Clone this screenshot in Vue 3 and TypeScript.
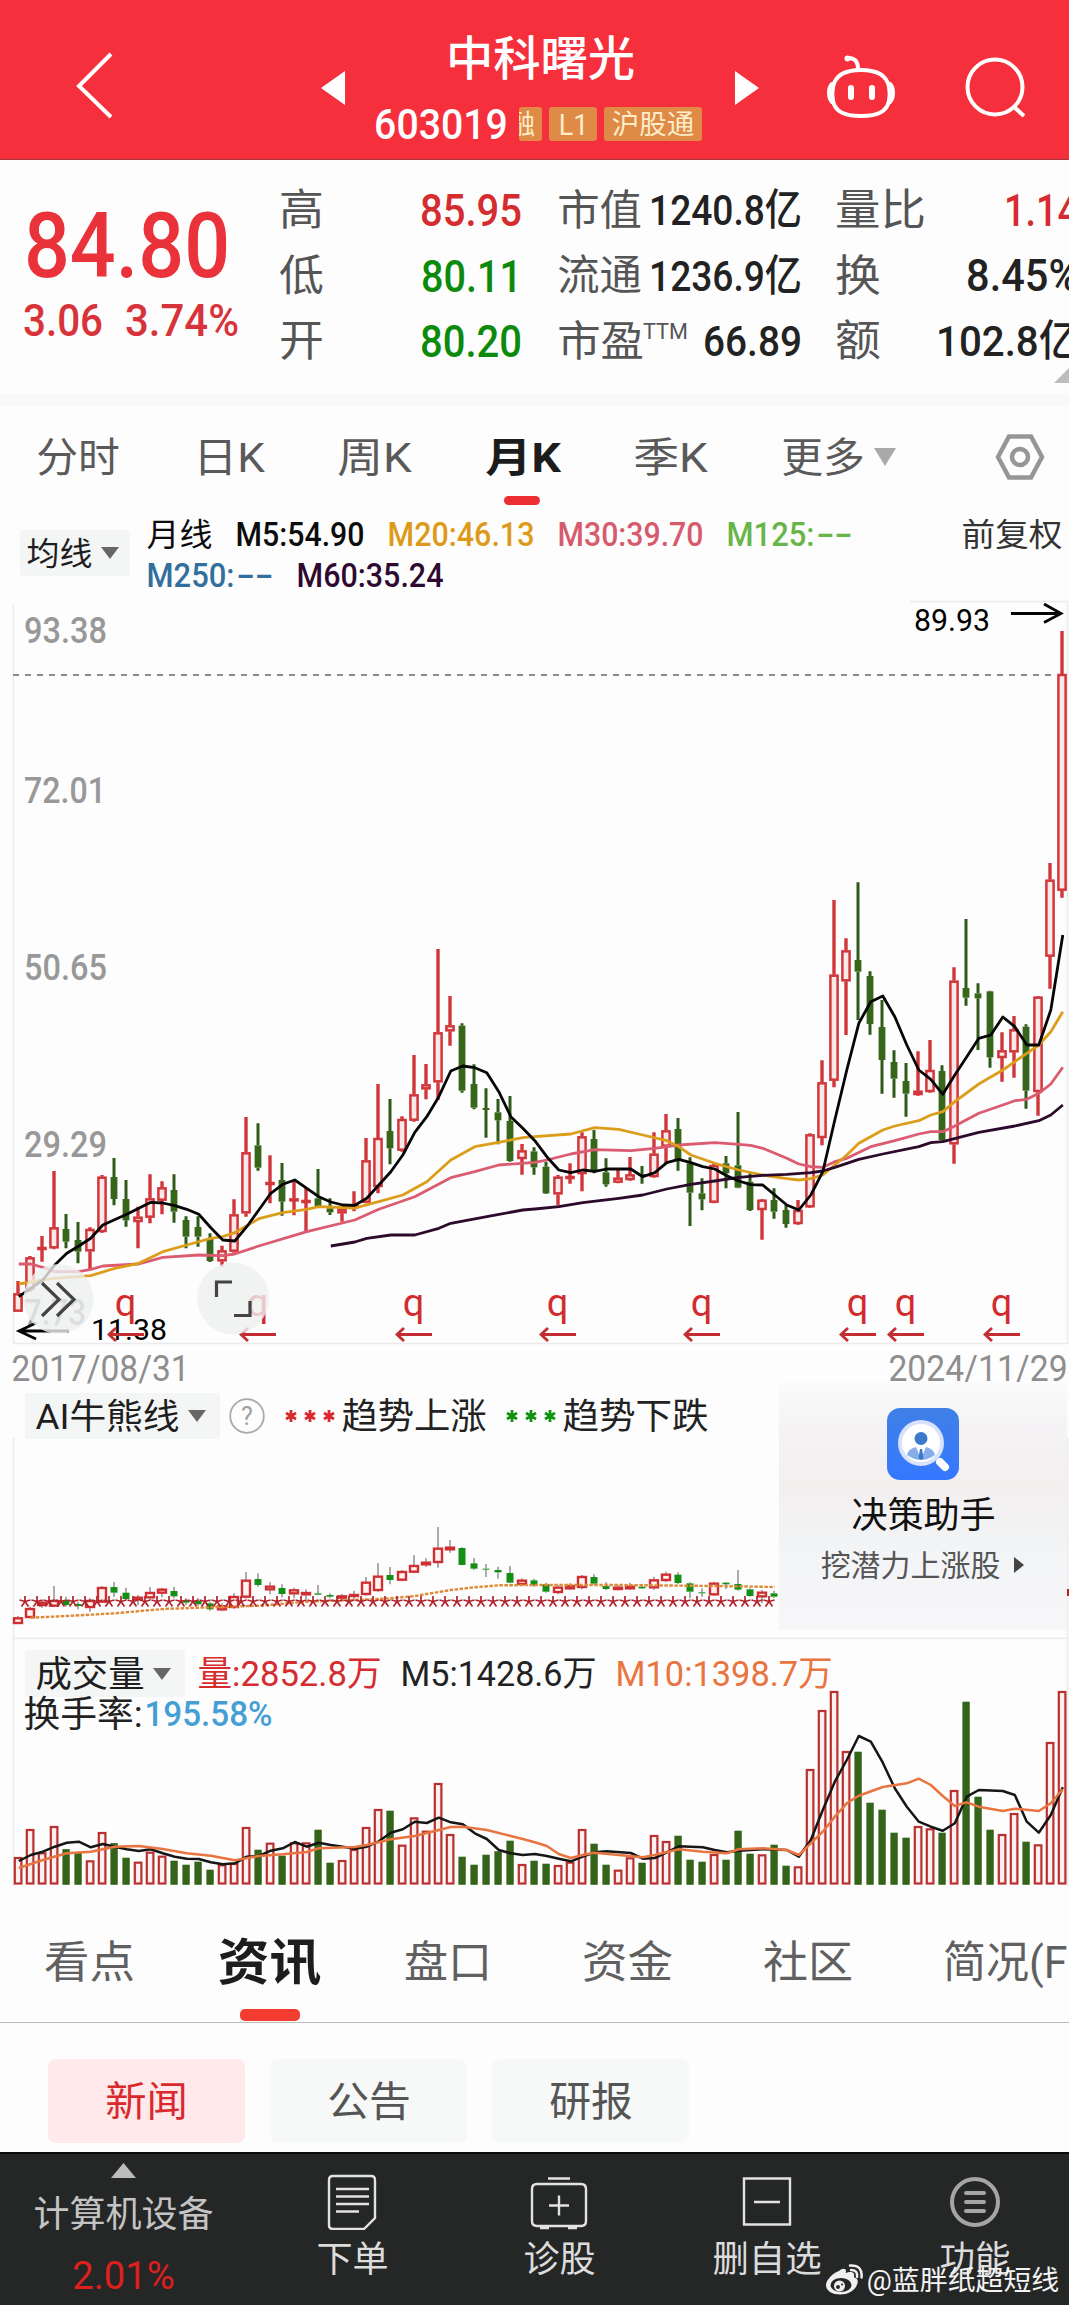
<script setup lang="ts">
import { h } from 'vue'

interface FitProps { t: string; w: number; s: number; b?: number }

// Single line of text whose glyphs span exactly `w` pixels at font size `s`.
const Fit = (p: FitProps) => {
  const pad = p.s * 0.045
  return h('svg', { class: 'fit', width: p.w, height: p.s }, [
    h('text', {
      x: -pad, y: p.s * 0.862, 'font-size': p.s, 'font-weight': p.b ?? 400, fill: 'currentColor',
      textLength: p.w + pad * 2, lengthAdjust: 'spacingAndGlyphs',
    }, p.t),
  ])
}

type Candle = { x: number; up: boolean; hi: number; top: number; bot: number; lo: number }
type Bar = { x: number; up: boolean; top: number }

const STEP = 12
const px = (i: number) => 18 + STEP * i

// Each record: direction, high, body top, body bottom, low (units of 1/3 px).
const parseCandles = (src: string): Candle[] =>
  src.trim().split(/\s+/).map((rec, i) => {
    const [hi, top, bot, lo] = rec.slice(1).split(',').map((n) => Number(n) / 3)
    return { x: px(i), up: rec[0] === 'r', hi, top, bot, lo }
  })

const parseLine = (src: string): string =>
  src.trim().split(/\s+/).map((rec) => {
    const [i, v] = rec.split(':').map(Number)
    return `${px(i) + 0.8},${(v / 3).toFixed(1)}`
  }).join(' ')

const candles = parseCandles(`
r1203,1240,1295,1295 r1128,1132,1230,1235 r1068,1101,1108,1145 r873,1042,1105,1108 g1002,1047,1085,1105
g1026,1080,1115,1150 r1042,1047,1114,1168 r885,890,1056,1058 g834,891,957,976 g900,957,1021,1040
r980,1010,1026,1105 r883,955,1013,1030 r904,922,962,1003 g883,930,995,1028 g1009,1020,1070,1105
g1009,1041,1070,1100 g1060,1075,1143,1146 r1097,1111,1144,1160 r958,1003,1115,1118 r711,817,1000,1010
g730,796,863,872 r826,906,912,970 g849,900,965,1007 r905,955,961,1006 r925,960,966,1055
g867,955,978,980 g955,985,997,1005 r980,986,1000,1025 r934,975,985,994 r774,841,968,970
r612,774,921,940 g657,753,805,853 r709,717,812,815 r525,643,722,725 r552,613,628,658
r207,457,607,660 r348,436,454,497 g430,437,632,638 g553,612,683,688 g625,684,690,773
g657,697,721,793 g648,723,843,845 r792,811,837,884 g802,814,862,884 g845,860,940,942
r885,890,943,976 r850,888,894,911 r757,769,882,934 g750,777,873,880 g835,877,913,920
r870,893,908,910 r831,883,900,902 g858,882,888,911 r757,821,891,893 r702,751,800,850
g714,747,840,872 g832,850,938,1038 g895,940,958,991 r850,855,968,970 g828,850,880,925
g696,856,923,925 g880,905,990,993 r957,959,990,1079 g925,960,995,1016 g975,990,1032,1043
r960,990,1032,1034 r760,763,982,984 r541,607,774,796 r60,284,602,622 r175,211,304,465
g7,240,275,420 g274,288,432,464 g360,441,540,641 g511,546,596,653 g549,603,641,710
r514,632,645,647 r480,570,636,638 g556,573,780,782 r262,302,793,851 g117,324,353,377
g310,340,355,510 g332,334,532,563 r457,511,534,605 r408,448,517,593 g433,440,632,686
r348,350,636,707 r-51,-1,230,326 r-747,-618,32,53`)

const averages = [
  { color: '#db5b70', pts: parseLine('0:1152 1:1152 2:1162 3:1175 5:1175 6:1168 7:1158 10:1152 12:1132 15:1125 17:1127 18:1122 20:1098 24:1055 28:1020 30:988 33:950 36:893 38:875 40:855 43:847 44:840 46:822 48:809 51:812 53:805 55:795 58:788 60:793 61:796 62:805 63:820 64:835 65:852 66:860 67:862 68:845 69:835 71:800 73:782 75:762 76:755 77:755 78:738 80:700 82:675 83:662 84:658 85:640 86:612 87:562') },
  { color: '#dc9d1b', pts: parseLine('0:1212 2:1200 3:1195 6:1187 8:1165 10:1150 12:1115 14:1095 16:1075 17:1070 18:1058 20:1016 22:998 24:988 25:980 28:984 30:965 32:945 34:905 36:840 38:800 40:787 42:773 43:770 46:762 48:743 50:748 52:765 54:782 55:800 56:825 58:850 60:870 62:885 64:896 65:900 66:896 67:885 68:855 69:825 70:790 72:750 73:738 75:722 76:705 77:695 78:665 80:612 82:570 84:520 85:495 86:455 87:395') },
  { color: '#2b0a2c', pts: parseLine('26:1098 28:1086 29:1075 31:1065 33:1065 35:1045 36:1030 39:1010 42:990 43:987 45:980 47:968 50:955 52:945 54:927 56:913 58:903 60:892 62:886 64:883 66:878 67:873 68:862 70:838 72:822 75:800 76:788 77:785 80:757 83:738 85:722 86:705 87:675') },
  { color: '#060606', pts: parseLine('0:1250 2:1200 3:1155 4:1120 5:1098 6:1075 7:1035 9:1003 11:967 12:969 13:977 14:988 15:1003 16:1043 17:1080 18:1083 19:1040 20:990 21:940 22:913 23:900 24:925 25:950 26:966 27:975 28:976 29:955 30:915 31:875 32:825 33:757 34:710 35:650 36:573 37:558 38:563 39:578 40:635 41:710 42:745 43:782 44:830 45:870 46:878 47:870 48:874 49:867 51:867 52:890 53:878 54:848 55:838 56:848 57:860 58:867 59:887 60:903 61:914 62:915 63:945 64:975 65:990 66:945 67:875 68:720 69:570 70:430 71:365 72:348 73:410 74:495 75:570 76:598 77:643 78:585 79:530 80:475 81:465 82:411 83:440 84:495 85:495 86:390 87:165') },
]

const trend = parseCandles(`
r828,832,852,852 r800,804,834,834 r780,785,798,803 r738,780,800,802 g770,780,795,800 g785,792,798,808
r775,780,804,815 r738,741,788,788 g726,741,758,770 g743,758,777,780 r765,770,780,795 r741,756,775,780
r743,746,761,772 g741,753,769,775 g775,780,788,795 g775,783,793,797 g785,790,808,812 r790,796,811,814
r760,768,804,806 r696,719,773,776 g700,717,735,740 r727,737,751,763 g733,744,762,772 r743,748,763,775
r748,756,766,778 g735,760,764,766 g760,765,770,775 r762,766,776,780 r752,762,771,778 r711,725,765,767
r670,707,753,755 g681,705,720,733 r690,693,722,724 r646,675,698,700 r655,665,676,681 r561,623,669,683
r600,620,631,638 g622,624,675,676 g654,670,686,690 g672,686,689,711 g680,690,697,716 g678,699,728,730
r715,719,735,738 g716,721,735,740 g728,733,755,758 r735,740,759,762 r730,735,748,750 r705,708,744,748
g703,711,731,735 g727,738,747,750 r735,740,750,751 r728,737,748,750 g735,740,745,747 r710,718,745,750
r695,701,723,727 g697,704,729,733 g727,730,755,775 g745,757,760,770 r725,728,766,768 g727,728,733,747
g690,732,749,752 g745,748,768,770 r750,755,772,790 g752,760,770,774`)
const trendLine = parseLine('1:833 4:828 8:820 12:807 16:802 20:797 24:785 28:780 31:775 33:768 36:750 38:742 40:736 44:735 50:735 58:738 63:741')
const stars = Array.from({ length: 63 }, (_, k) => 25 + k * STEP)

const volumes: Bar[] = `r654 r570 r640 r561 g628 g638 r664 r579 g610 g654 r668 r638 r650 g663 g675 g666 g690 r676 r672 r564 g630 r611
g648 r610 r610 g570 g669 r663 r630 r564 r510 g513 r617 r535 r575 r432 r585 g651 g675 g645 g635 g603 r675 g663
g672 r678 r668 r570 g612 g675 r692 r655 g669 r588 r606 g588 g660 g666 r645 g660 g573 g642 r646 g615 g678 r682
r390 r213 r156 r336 g336 g489 g510 g579 g594 r561 r568 g579 r453 g186 g471 g570 r585 r522 g606 r616 r309 r156`
  .split(/\s+/).map((rec, i) => ({ x: px(i), up: rec[0] === 'r', top: Number(rec.slice(1)) / 3 }))
const vol5 = parseLine('0:663 1:645 2:635 3:620 4:608 5:605 6:622 7:612 8:620 9:628 10:633 11:628 12:640 13:650 14:656 15:657 16:667 17:673 18:670 19:650 20:648 21:632 22:625 23:606 24:620 25:608 26:615 27:620 28:626 29:620 30:604 31:578 32:568 33:545 34:549 35:533 36:547 37:553 38:580 39:597 40:630 41:640 42:645 43:642 44:648 45:656 46:664 47:650 48:637 49:634 51:639 52:656 53:654 54:637 55:619 57:622 58:630 59:637 60:632 62:628 64:630 65:650 66:600 67:510 68:425 69:360 70:288 71:305 72:368 73:445 74:500 75:545 76:560 77:572 78:550 79:470 80:450 82:453 83:465 84:545 85:578 86:525 87:442')
const vol10 = parseLine('0:684 2:660 4:640 6:635 8:620 10:618 12:627 14:640 16:647 18:661 20:648 22:643 24:636 25:625 28:621 29:615 31:598 33:588 35:570 36:561 37:560 39:570 41:588 42:597 43:607 44:618 45:642 46:654 47:645 48:638 50:645 52:652 53:645 55:628 57:635 59:640 60:628 62:625 64:630 65:645 66:610 67:575 68:530 69:490 70:467 72:441 74:430 75:416 76:435 77:468 78:498 79:487 80:500 82:513 83:506 85:513 86:490 87:448')

const axis = [
  { t: '93.38', y: 643, w: 83 }, { t: '72.01', y: 803, w: 82 }, { t: '50.65', y: 980, w: 83 },
  { t: '29.29', y: 1157, w: 83 }, { t: '7.73', y: 1325, w: 62 },
]
const rights = [126, 258, 414, 558, 702, 858, 906, 1002]
</script>

<template>
  <main class="screen">
    <header class="top">
      <svg class="back" width="40" height="70" viewBox="74 50 40 70"><path d="M111 54 79 86l32 31" /></svg>
      <svg class="arrow" width="24" height="34"><path d="M24 0v34L0 17z" /></svg>
      <div class="name">
        <Fit t="中科曙光" :w="185" :s="47" :b="500" />
        <div class="code">
          <Fit t="603019" :w="130" :s="42" :b="500" />
          <span class="tag cut"><Fit t="融" :w="26" :s="27" /></span>
          <span class="tag l1"><Fit t="L1" :w="27" :s="29" /></span>
          <span class="tag hgt"><Fit t="沪股通" :w="80" :s="27" /></span>
        </div>
      </div>
      <svg class="arrow next" width="24" height="34"><path d="M0 0v34l24-17z" /></svg>
      <svg class="bot" width="70" height="66" viewBox="826 54 70 66">
        <path d="M847 58q11-1 11 11M861 70c18 0 26 6 28 17 1 5 1 9 0 14-2 10-10 15-28 15s-26-5-28-15c-1-5-1-9 0-14 2-11 10-17 28-17z" />
        <path d="M832 84c-4 4-4 14 0 18M890 84c4 4 4 14 0 18" />
        <circle cx="847.500" cy="58.500" r="3" class="solid" />
        <path d="M851 88v9M872 88v9" class="eye" />
      </svg>
      <svg class="find" width="64" height="64" viewBox="964 56 64 64"><circle cx="995" cy="87" r="27.500" /><path d="m1014 107 10 9" /></svg>
    </header>

    <section class="quote">
      <div class="price">
        <Fit t="84.80" :w="198" :s="91" :b="500" />
        <div class="delta"><Fit t="3.06" :w="76" :s="45" :b="500" /><Fit t="3.74%" :w="110" :s="45" :b="500" /></div>
      </div>
      <div class="col c1">
        <div><Fit t="高" :w="41" :s="43" /><Fit class="up" t="85.95" :w="98" :s="45" :b="500" /></div>
        <div><Fit t="低" :w="41" :s="43" /><Fit class="down" t="80.11" :w="97" :s="45" :b="500" /></div>
        <div><Fit t="开" :w="41" :s="43" /><Fit class="down" t="80.20" :w="98" :s="45" :b="500" /></div>
      </div>
      <div class="col c2">
        <div><Fit t="市值" :w="81" :s="42" /><Fit class="ink" t="1240.8亿" :w="149" :s="43" :b="500" /></div>
        <div><Fit t="流通" :w="81" :s="42" /><Fit class="ink" t="1236.9亿" :w="149" :s="43" :b="500" /></div>
        <div><span class="pe"><Fit t="市盈" :w="83" :s="42" /><Fit t="TTM" :w="43" :s="22" /></span><Fit class="ink" t="66.89" :w="95" :s="43" :b="500" /></div>
      </div>
      <div class="col c3">
        <div><Fit t="量比" :w="87" :s="43" /><Fit class="up" t="1.14" :w="71" :s="44" :b="500" /></div>
        <div><Fit t="换" :w="42" :s="43" /><Fit class="ink" t="8.45%" :w="109" :s="44" :b="500" /></div>
        <div><Fit t="额" :w="42" :s="43" /><Fit class="ink" t="102.8亿" :w="139" :s="43" :b="500" /></div>
      </div>
      <svg class="corner" width="15" height="15"><path d="M15 0v15H0z" /></svg>
    </section>

    <nav class="periods">
      <Fit t="分时" :w="80" :s="41" /><Fit t="日K" :w="68" :s="41" /><Fit t="周K" :w="71" :s="41" />
      <span class="on"><Fit t="月K" :w="72" :s="41" :b="700" /><i></i></span>
      <Fit t="季K" :w="71" :s="41" />
      <span class="more"><Fit t="更多" :w="80" :s="41" /><svg width="22" height="18"><path d="M0 0h22L11 18z" /></svg></span>
      <svg class="hex" width="50" height="48" viewBox="-25 -24 50 48"><path d="M-11-20.500h22L22 0 11 20.500h-22L-22 0z" /><circle r="8" /></svg>
    </nav>

    <section class="legend">
      <span class="drop ma"><Fit t="均线" :w="63" :s="32" /><svg width="18" height="12"><path d="M0 0h18L9 12z" /></svg></span>
      <div class="lines">
        <div>
          <Fit class="k" t="月线" :w="63" :s="32" /><Fit class="k" t="M5:54.90" :w="126" :s="33" :b="500" />
          <Fit class="m20" t="M20:46.13" :w="144" :s="33" :b="500" /><Fit class="m30" t="M30:39.70" :w="143" :s="33" :b="500" />
          <span class="m125"><Fit t="M125:" :w="85" :s="33" :b="500" /><Fit t="--" :w="33" :s="33" :b="500" /></span>
        </div>
        <div>
          <span class="m250"><Fit t="M250:" :w="85" :s="33" :b="500" /><Fit t="--" :w="34" :s="33" :b="500" /></span>
          <Fit class="m60" t="M60:35.24" :w="144" :s="33" :b="500" />
        </div>
      </div>
      <Fit class="adj" t="前复权" :w="98" :s="32" />
    </section>

    <svg class="main" width="1069" height="745" viewBox="0 600 1069 745">
      <path d="M13.500 604V1343.500H1067.500V601.500H910" class="frame" />
      <text v-for="a in axis" :key="a.t" x="24" :y="a.y" :textLength="a.w" font-size="36" font-weight="500" lengthAdjust="spacingAndGlyphs" fill="#989898">{{ a.t }}</text>
      <path d="M13 675H1056" class="dash" />
      <g transform="translate(0 880)">
        <g v-for="(c, i) in candles" :key="i" :class="c.up ? 'rise' : 'fall'">
          <path :d="`M${c.x} ${c.hi}V${c.top}M${c.x} ${c.bot}V${c.lo}`" />
          <rect v-if="c.up" :x="c.x - 3.6" :y="c.top + 1" width="7.200" :height="Math.max(c.bot - c.top - 2, 1)" />
          <rect v-else :x="c.x - 3.4" :y="c.top" width="6.800" :height="c.bot - c.top" />
        </g>
        <polyline v-for="m in averages" :key="m.color" :points="m.pts" :stroke="m.color" class="avg" />
      </g>
      <text x="914" y="631" font-size="32" textLength="76" lengthAdjust="spacingAndGlyphs">89.93</text>
      <path d="M1011 613.500h50M1044 604l17 9.500-17 9" class="mark" />
      <text x="91" y="1340" font-size="29" textLength="76" lengthAdjust="spacingAndGlyphs">11.38</text>
      <path d="M69 1331H19M36 1323l-17 8 17 8" class="mark" />
      <g v-for="r in rights" :key="r" class="right">
        <text :x="r - 0.5" y="1316" text-anchor="middle" font-size="38">q</text>
        <path :d="`M${r + 18} 1334.500H${r - 17}M${r - 10} 1328l-7 6.500 7 6.500`" />
      </g>
      <circle cx="58.500" cy="1299" r="35" class="knob" />
      <circle cx="233" cy="1298.500" r="36" class="knob" />
      <path d="m42 1283 17 16.500-17 16.500M57 1283l17 16.500-17 16.500M216.500 1297v-15H232M250 1301v14.500h-16" class="glyph" />
    </svg>

    <div class="dates"><Fit t="2017/08/31" :w="175" :s="36" /><Fit t="2024/11/29" :w="176" :s="36" /></div>

    <section class="bull">
      <div class="head">
        <span class="drop ai"><Fit t="AI牛熊线" :w="141" :s="35" /><svg width="18" height="12"><path d="M0 0h18L9 12z" /></svg></span>
        <svg class="help" width="36" height="36"><circle cx="18" cy="18" r="16.800" /><text x="18" y="27" text-anchor="middle" font-size="25">?</text></svg>
        <svg class="ast red" width="52" height="14"><path v-for="x in [7, 26, 45]" :key="x" :d="`M${x} 1v12M${x - 5} 4l10 6M${x + 5} 4l-10 6`" /></svg>
        <Fit t="趋势上涨" :w="142" :s="36" />
        <svg class="ast green" width="52" height="14"><path v-for="x in [7, 26, 45]" :key="x" :d="`M${x} 1v12M${x - 5} 4l10 6M${x + 5} 4l-10 6`" /></svg>
        <Fit t="趋势下跌" :w="143" :s="36" />
      </div>
      <svg class="plot" width="1069" height="201" viewBox="0 1438 1069 201">
        <path d="M13.500 1438V1639M1067.500 1438V1639M13 1638.500H1067" class="frame" />
        <path d="M1068 1589v7" stroke="#b22" stroke-width="2" />
        <g transform="translate(0 1340)">
          <g v-for="(c, i) in trend" :key="i" :class="c.up ? 'trise' : 'tfall'">
            <path :d="`M${c.x} ${c.hi}V${c.top}M${c.x} ${c.bot}V${c.lo}`" />
            <rect v-if="c.up" :x="c.x - 4" :y="c.top + 1" width="8" :height="Math.max(c.bot - c.top - 2, 1)" />
            <rect v-else :x="c.x - 3.5" :y="c.top" width="7" :height="Math.max(c.bot - c.top, 1)" />
          </g>
          <polyline :points="trendLine" class="dots" />
          <path v-for="x in stars" :key="x" :d="`M${x} 256v5.500M${x} 261.500l-5.500-1.500M${x} 261.500l5.500-1.500M${x} 261.500l-3.500 5M${x} 261.500l3.500 5`" class="star" />
        </g>
      </svg>
      <aside class="helper">
        <svg width="72" height="72" viewBox="0 0 72 72">
          <defs><linearGradient id="tile" x1="0" y1="0" x2="0" y2="1"><stop offset="0" stop-color="#3f80e6" /><stop offset="1" stop-color="#3578ff" /></linearGradient></defs>
          <rect width="72" height="72" rx="13" fill="url(#tile)" />
          <path d="m53 54 5 5" stroke="#fff" stroke-width="8" stroke-linecap="round" />
          <circle cx="34" cy="35" r="21" fill="#fff" stroke="#d8e2fa" stroke-width="4" />
          <circle cx="34" cy="30.500" r="6.500" fill="#3c78cc" />
          <path d="M20 47q1-6 9-8l5 12 5-12q8 2 9 8-7 5-14 5t-14-5z" fill="#87aee8" />
          <path d="M33 41h2l1.500 9-2.500 2-2.500-2z" fill="#3c78cc" />
        </svg>
        <Fit t="决策助手" :w="141" :s="36" />
        <span><Fit t="挖潜力上涨股" :w="177" :s="30" /><svg width="10" height="16"><path d="M0 0l10 8-10 8z" /></svg></span>
      </aside>
    </section>

    <section class="volume">
      <svg class="plot" width="1069" height="251" viewBox="0 1639 1069 251">
        <path d="M13.500 1639V1886M1067.500 1639V1886" class="frame" />
        <g transform="translate(0 1640)">
          <template v-for="(v, i) in volumes" :key="i">
            <rect v-if="v.up" :x="v.x - 3.2" :y="v.top" width="6.600" :height="243.500 - v.top" class="vup" />
            <rect v-else :x="v.x - 3.2" :y="v.top" width="6.600" :height="244.500 - v.top" class="vdown" />
          </template>
          <polyline :points="vol5" stroke="#161616" class="vavg" />
          <polyline :points="vol10" stroke="#e8743f" class="vavg" />
        </g>
      </svg>
      <div class="over">
        <div class="r1">
          <span class="drop vol"><Fit t="成交量" :w="106" :s="36" /><svg width="18" height="12"><path d="M0 0h18L9 12z" /></svg></span>
          <Fit class="up" t="量:2852.8万" :w="181" :s="35" />
          <Fit class="ink" t="M5:1428.6万" :w="193" :s="35" />
          <Fit class="m10" t="M10:1398.7万" :w="214" :s="35" />
        </div>
        <div class="r2"><Fit t="换手率:" :w="116" :s="36" /><Fit class="rate" t="195.58%" :w="125" :s="35" :b="500" /></div>
      </div>
    </section>

    <nav class="sections">
      <Fit t="看点" :w="87" :s="44" />
      <span class="on"><Fit t="资讯" :w="99" :s="50" :b="700" /><i></i></span>
      <Fit t="盘口" :w="84" :s="44" /><Fit t="资金" :w="87" :s="44" /><Fit t="社区" :w="86" :s="44" /><Fit t="简况(F10)" :w="184" :s="44" />
    </nav>

    <div class="chips">
      <span class="sel"><Fit t="新闻" :w="79" :s="41" /></span>
      <span><Fit t="公告" :w="80" :s="41" /></span>
      <span><Fit t="研报" :w="80" :s="41" /></span>
    </div>

    <footer class="bar">
      <div class="sector">
        <svg width="25" height="15"><path d="M12.500 0 25 15H0z" /></svg>
        <Fit t="计算机设备" :w="177" :s="36" />
        <Fit class="pct" t="2.01%" :w="99" :s="38" />
      </div>
      <div class="act a1">
        <svg width="58" height="56" viewBox="-29 -28 58 56"><path d="M-19-26h38q4 0 4 4v38l-11 11h-31q-4 0-4-4v-45q0-4 4-4zM-16-13h33M-16-5.500h33M-16 2h33M-16 9.500H7" /></svg>
        <Fit t="下单" :w="69" :s="36" />
      </div>
      <div class="act a2">
        <svg width="58" height="56" viewBox="-29 -28 58 56"><path d="M-11-23.500h22M-22-18h44q5 0 5 5v32q0 5-5 5h-44q-5 0-5-5v-32q0-5 5-5zM-10 3.500H10M0-6.500v20M-19 26h9M9 26h9" /></svg>
        <Fit t="诊股" :w="69" :s="36" />
      </div>
      <div class="act a3">
        <svg width="58" height="56" viewBox="-29 -28 58 56"><path d="M-23-23.500h46v46h-46zM-13 0h26" /></svg>
        <Fit t="删自选" :w="106" :s="36" />
      </div>
      <div class="act a4">
        <svg width="58" height="56" viewBox="-29 -28 58 56"><circle r="23" /><path d="M-9-9H9M-9 0H9M-9 9H9" /></svg>
        <Fit t="功能" :w="68" :s="36" />
      </div>
      <div class="credit">
        <svg width="37" height="32" viewBox="0 0 37 32">
          <path d="M13 7c3-3 7-3 7 0 0 1-.5 2 0 2 2-1 7-2 8 1 .6 2-.8 3 .4 3.500 3 1 4 3 3 6-2 7-9 11-17 11C6 30.500 0 27 0 21 0 16 8 8 13 7z" />
          <ellipse cx="15" cy="21" rx="10.500" ry="7" class="hole" />
          <circle cx="13.500" cy="22" r="5.500" />
          <circle cx="12" cy="23" r="2" class="hole" /><circle cx="16" cy="20.500" r="1" class="hole" />
          <path d="M25 6q7 0 6 7M24 1.500q13-.5 11.500 12" class="wave" />
        </svg>
        <Fit t="@蓝胖纸超短线" :w="190" :s="27" />
      </div>
    </footer>
  </main>
</template>

<style>
body { background: #fdfdfd; }
</style>

<style scoped>
.screen { width: 1069px; height: 2305px; overflow: hidden; background: #fdfdfd; color: #222; font-family: Roboto, "Noto Sans CJK SC", sans-serif; }
.fit { display: block; flex: none; overflow: visible; }
svg { flex: none; display: block; }
.up { color: #d52c30; }
.down { color: #0b8a0b; }
.ink { color: #222; }

.top { height: 160px; box-sizing: border-box; border-bottom: 1px solid #a8343c; background: #f5303c; color: #fff; display: flex; align-items: flex-start; }
.back { margin: 50px 0 0 74px; fill: none; stroke: #fff; stroke-width: 4; }
.arrow { margin: 71px 0 0 207px; fill: #fff; }
.name { margin: 34px 0 0 31px; width: 328px; display: flex; flex-direction: column; align-items: flex-start; }
.name > .fit { margin-left: 72px; }
.code { display: flex; align-items: center; margin-top: 22px; height: 42px; }
.tag { height: 34px; background: #df8b47; border-radius: 3px; color: #fdecc8; display: flex; align-items: center; justify-content: center; overflow: hidden; }
.cut { width: 23px; margin-left: 13px; justify-content: flex-end; padding-right: 8px; box-sizing: border-box; }
.l1 { width: 48px; margin-left: 7px; }
.hgt { width: 98px; margin-left: 7px; }
.next { margin-left: 31px; }
.bot { margin: 54px 0 0 67px; fill: none; stroke: #fff; stroke-width: 4; stroke-linecap: round; }
.bot .solid { fill: #fff; stroke: none; }
.bot .eye { stroke-width: 6; }
.find { margin: 56px 0 0 68px; fill: none; stroke: #fff; stroke-width: 4; }

.quote { position: relative; height: 234px; border-bottom: 12px solid #f8faf9; box-sizing: content-box; display: flex; color: #555; }
.price { width: 212px; flex: none; margin: 39px 0 0 28px; color: #e9323a; }
.delta { display: flex; gap: 26px; margin: 7px 0 0 -3px; color: #d8333a; }
.col { flex: none; height: 176px; margin-top: 27px; display: flex; flex-direction: column; justify-content: space-between; }
.col > div { height: 45px; display: flex; justify-content: space-between; align-items: center; }
.c1 { width: 239px; margin-left: 41px; }
.c2 { width: 241px; margin-left: 39px; }
.c3 { width: 240px; margin-left: 37px; }
.pe { display: flex; gap: 2px; }
.corner { position: absolute; right: 0; top: 208px; fill: #bdbdbd; }

.periods { height: 106px; padding: 0 24px 4px 38px; display: flex; align-items: center; gap: 76.500px; color: #5a5a5a; box-sizing: border-box; }
.periods .on { position: relative; color: #1c1c1c; }
.periods .on i { position: absolute; left: 17px; top: 59px; width: 36px; height: 9px; border-radius: 5px; background: #ec2d34; }
.more { display: flex; align-items: center; gap: 11px; }
.more svg:last-child { fill: #a9a9a9; }
.hex { margin-left: auto; fill: none; stroke: #969696; stroke-width: 4.500; }

.legend { height: 88px; display: flex; align-items: flex-start; box-sizing: border-box; padding: 6px 8px 0 20px; }
.drop { display: flex; align-items: center; background: #f4f6f5; color: #1e1e1e; box-sizing: border-box; border-radius: 4px; gap: 10px; }
.drop svg:last-child { fill: #666; }
.ma { width: 110px; height: 46px; margin-top: 12px; padding-left: 8px; }
.lines { margin-left: 18px; display: flex; flex-direction: column; gap: 8px; }
.lines > div { display: flex; gap: 26px; }
.lines span { display: flex; gap: 5px; }
.adj { margin-left: auto; color: #333; }
.k { color: #0c0c0c; }
.m20 { color: #dd9a18; }
.m30 { color: #d65b6d; }
.m125 { color: #68b548; }
.m250 { color: #316f9d; }
.m60 { color: #2e0a31; }

.frame { fill: none; stroke: #ebebeb; stroke-width: 1.500; }
.dash { stroke: #8c8c8c; stroke-width: 1.800; stroke-dasharray: 6 6; }
.rise path { stroke: #d1363b; stroke-width: 3.400; }
.rise rect { fill: #fbe9e9; stroke: #d1363b; stroke-width: 2.500; }
.fall path { stroke: #2f5a1a; stroke-width: 3; }
.fall rect { fill: #35661a; }
.avg { fill: none; stroke-width: 2.800; stroke-linejoin: round; }
.mark { fill: none; stroke: #050505; stroke-width: 2.800; }
.right text { fill: #d22b2e; }
.right path { fill: none; stroke: #c32d31; stroke-width: 2.800; }
.knob { fill: #eef0f0; fill-opacity: .8; }
.glyph { fill: none; stroke: #444; stroke-width: 3.200; }

.dates { height: 45px; box-sizing: border-box; padding: 5px 3px 0 13px; display: flex; justify-content: space-between; color: #8e8e8e; }

.bull { position: relative; height: 249px; }
.head { height: 48px; display: flex; align-items: center; padding: 4px 0 0 25px; box-sizing: border-box; }
.ai { width: 195px; height: 46px; padding-left: 12px; }
.help { margin-left: 9px; fill: none; stroke: #a9a9a9; stroke-width: 1.800; }
.help text { fill: #a0a0a0; stroke: none; }
.ast { margin: 0 7px 0 19px; stroke-width: 2.800; fill: none; }
.ast.green { margin-left: 20px; }
.red { stroke: #d8292f; }
.green { stroke: #119311; }
.trise path, .tfall path { stroke: #808080; stroke-width: 1.300; }
.trise rect { fill: #fff3ef; stroke: #cf2e33; stroke-width: 2.400; }
.tfall rect { fill: #128f14; }
.dots { fill: none; stroke: #e08a38; stroke-width: 2.400; stroke-dasharray: 3.500 1.500; }
.star { stroke: #b2242c; stroke-width: 1.700; fill: none; }
.helper { position: absolute; left: 779px; top: -8px; width: 288px; height: 248px; box-sizing: border-box; padding-top: 26px; background: linear-gradient(#fbfbfb, #f5f3f5 18%, #f4efef 42%, #f2f4f6 66%, #f7f6f9); display: flex; flex-direction: column; align-items: center; color: #111; }
.helper > .fit { margin-top: 17px; }
.helper span { display: flex; align-items: center; gap: 15px; margin-top: 17px; color: #555; }
.helper span svg:last-child { fill: #444; }

.volume { position: relative; height: 251px; }
.over { position: absolute; left: 25px; top: 11px; }
.r1 { display: flex; align-items: center; height: 47px; gap: 22px; }
.vol { width: 160px; height: 47px; padding-left: 12px; margin-right: -8px; }
.r2 { display: flex; gap: 5px; margin-top: -1px; color: #222; }
.rate { color: #469fd4; }
.m10 { color: #ea7440; }
.vup { fill: #fdf0ef; stroke: #b8302f; stroke-width: 2.200; }
.vdown { fill: #33641a; stroke: #33641a; stroke-width: .6; }
.vavg { fill: none; stroke-width: 2.500; stroke-linejoin: round; }

.sections { height: 133px; box-sizing: border-box; border-bottom: 1.500px solid #bcbcbc; padding: 12px 0 0 46px; display: flex; align-items: center; gap: 94px; color: #606060; }
.sections .on { position: relative; color: #1d1d1d; margin: 0 -7px; }
.sections .on i { position: absolute; left: 20px; top: 72px; width: 60px; height: 12px; border-radius: 5px; background: #f43c30; }

.chips { height: 129px; box-sizing: border-box; padding: 36px 0 0 48px; display: flex; gap: 25px; }
.chips span { width: 197px; height: 84px; border-radius: 8px; background: #f7f9f9; color: #555; display: flex; align-items: center; justify-content: center; }
.chips .sel { background: #ffe9ea; color: #d9292f; }

.bar { position: relative; height: 153px; box-sizing: border-box; border-top: 2px solid #0a0a0a; background: #252727; color: #dcdcdc; display: flex; }
.sector { width: 177px; margin-left: 35px; display: flex; flex-direction: column; align-items: center; padding-top: 9px; color: #c4c4c4; }
.sector > svg:first-child { fill: #bcbcbc; }
.sector .fit { margin-top: 18px; }
.sector .pct { margin-top: 24px; color: #dd1f1d; }
.act { width: 106px; flex: none; display: flex; flex-direction: column; align-items: center; padding-top: 20px; gap: 11px; }
.act > svg:first-child { fill: none; stroke: #e2e2e2; stroke-width: 2.400; }
.a1 { margin-left: 87px; }
.a2 { margin-left: 101px; }
.a3 { margin-left: 102px; }
.a4 { margin-left: 102px; }
.act.a4 > svg:first-child { stroke: #a5a5a5; stroke-width: 4; stroke-linecap: round; }
.credit { position: absolute; left: 826px; top: 110px; display: flex; align-items: center; gap: 5px; color: #f4f4f4; }
.credit svg:first-child { fill: #f0f0f0; }
.credit .hole { fill: #252727; }
.credit .wave { fill: none; stroke: #f0f0f0; stroke-width: 2.500; stroke-linecap: round; }
</style>
